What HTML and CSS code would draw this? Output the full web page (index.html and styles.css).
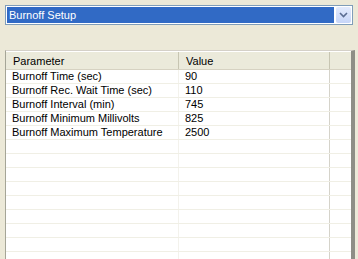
FILE: index.html
```html
<!DOCTYPE html>
<html lang="en">

<head>
  <meta charset="UTF-8">
  <title>Burnoff Setup</title>
  <link rel="stylesheet" href="styles.css">
</head>

<body>
  <div class="combo">
    <div class="combo-text"><span>Burnoff Setup</span></div>
    <div class="combo-btn">
      <svg width="9" height="6" viewBox="0 0 9 6"><path d="M1 1 L4.5 4.5 L8 1" fill="none" stroke="#5a6d92" stroke-width="1.6"/></svg>
    </div>
  </div>

  <div class="grid">
    <div class="row head">
      <div class="cell c1">Parameter</div>
      <div class="cell c2">Value</div>
      <div class="cell c3"></div>
    </div>
    <div class="row"><div class="cell c1">Burnoff Time (sec)</div><div class="cell c2">90</div><div class="cell c3"></div></div>
    <div class="row"><div class="cell c1">Burnoff Rec. Wait Time (sec)</div><div class="cell c2">110</div><div class="cell c3"></div></div>
    <div class="row"><div class="cell c1">Burnoff Interval (min)</div><div class="cell c2">745</div><div class="cell c3"></div></div>
    <div class="row"><div class="cell c1">Burnoff Minimum Millivolts</div><div class="cell c2">825</div><div class="cell c3"></div></div>
    <div class="row"><div class="cell c1">Burnoff Maximum Temperature</div><div class="cell c2">2500</div><div class="cell c3"></div></div>
    <div class="row"><div class="cell c1"></div><div class="cell c2"></div><div class="cell c3"></div></div>
    <div class="row"><div class="cell c1"></div><div class="cell c2"></div><div class="cell c3"></div></div>
    <div class="row"><div class="cell c1"></div><div class="cell c2"></div><div class="cell c3"></div></div>
    <div class="row"><div class="cell c1"></div><div class="cell c2"></div><div class="cell c3"></div></div>
    <div class="row"><div class="cell c1"></div><div class="cell c2"></div><div class="cell c3"></div></div>
    <div class="row"><div class="cell c1"></div><div class="cell c2"></div><div class="cell c3"></div></div>
    <div class="row"><div class="cell c1"></div><div class="cell c2"></div><div class="cell c3"></div></div>
    <div class="row"><div class="cell c1"></div><div class="cell c2"></div><div class="cell c3"></div></div>
    <div class="row"><div class="cell c1"></div><div class="cell c2"></div><div class="cell c3"></div></div>
    <div class="row"><div class="cell c1"></div><div class="cell c2"></div><div class="cell c3"></div></div>
  </div>
</body>

</html>
```

FILE: styles.css
```css
html,
body {
  margin: 0;
  height: 259px;
  overflow: hidden;
}

body {
  background-color: #ece9d8;
  font-family: "Liberation Sans", Arial, sans-serif;
  font-size: 11px;
  color: #000;
  padding: 5px 5px 0 5px;
  box-sizing: border-box;
}

.combo {
  display: flex;
  height: 20px;
  border: 1px solid #7f9db9;
  background-color: #fff;
  box-sizing: border-box;
}

.combo-text {
  flex: 1;
  padding: 1px;
  display: flex;
}

.combo-text span {
  flex: 1;
  background-color: #316ac5;
  color: #fff;
  padding-left: 2px;
  line-height: 16px;
}

.combo-btn {
  width: 15px;
  margin: 1px;
  background: linear-gradient(#e3ebfd, #c6d5f8);
  border-radius: 2px;
  display: flex;
  align-items: center;
  justify-content: center;
}

.grid {
  margin-top: 25px;
  margin-right: -2px;
  height: 220px;
  background-color: #fff;
  border-left: 1px solid #a5a597;
  border-top: 1px solid #d4d0c8;
  border-right: 4px solid #8e8e86;
  overflow: hidden;
}

.row {
  display: flex;
  height: 13px;
  border-bottom: 1px solid #f0efe5;
}

.row.head {
  height: 17px;
  background-color: #ebeadb;
  border-top: 1px solid #fff;
  border-bottom: 1px solid #d6d2c2;
}

.cell {
  line-height: 13px;
  padding-left: 6px;
  box-sizing: border-box;
  white-space: nowrap;
}

.head .cell {
  line-height: 18px;
  padding-left: 7px;
}

.c1 {
  width: 173px;
  border-right: 1px solid #f3f2ec;
}

.c2 {
  width: 151px;
  border-right: 1px solid #d5d3ca;
}

.head .c1,
.head .c2 {
  border-right: 1px solid #c7c5b2;
}

.c3 {
  flex: 1;
}
```
